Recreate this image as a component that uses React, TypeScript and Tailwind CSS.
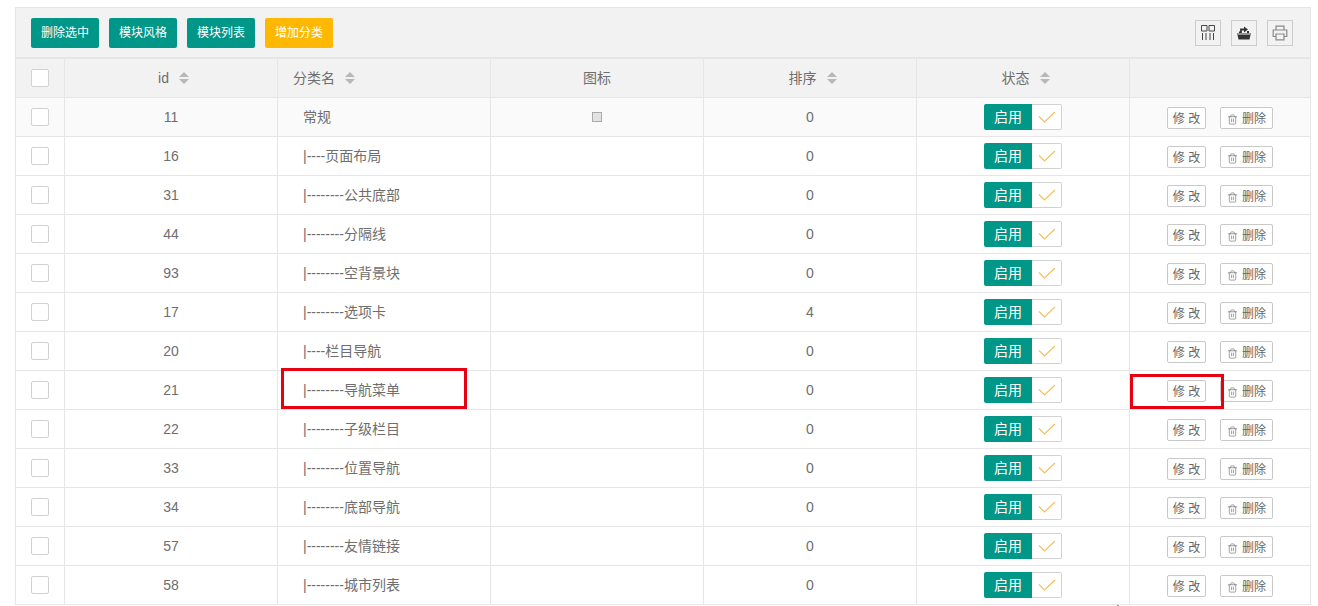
import { Trash2 } from "lucide-react";

const rows = [
  { id: 11, name: "常规", order: 0, icon: true },
  { id: 16, name: "|----页面布局", order: 0 },
  { id: 31, name: "|--------公共底部", order: 0 },
  { id: 44, name: "|--------分隔线", order: 0 },
  { id: 93, name: "|--------空背景块", order: 0 },
  { id: 17, name: "|--------选项卡", order: 4 },
  { id: 20, name: "|----栏目导航", order: 0 },
  { id: 21, name: "|--------导航菜单", order: 0 },
  { id: 22, name: "|--------子级栏目", order: 0 },
  { id: 33, name: "|--------位置导航", order: 0 },
  { id: 34, name: "|--------底部导航", order: 0 },
  { id: 57, name: "|--------友情链接", order: 0 },
  { id: 58, name: "|--------城市列表", order: 0 },
];

function SortIcon() {
  return (
    <svg width="10" height="12" viewBox="0 0 10 12" className="ml-[10px] shrink-0 fill-[#b8b8b8]">
      <path d="M5 0 10 5H0Z" />
      <path d="M5 12 0 7h10Z" />
    </svg>
  );
}

function Checkbox() {
  return <span className="block h-[18px] w-[18px] rounded-[2px] border border-[#d2d2d2] bg-white" />;
}

function ToolButton({ children }: { children: React.ReactNode }) {
  return <div className="flex h-[26px] w-[26px] items-center justify-center border border-[#ccc]">{children}</div>;
}

function Switch() {
  return (
    <div className="flex h-[26px] w-[78px]">
      <span className="flex w-[48px] items-center justify-center rounded-l-[2px] bg-[#009688] text-sm text-white">启用</span>
      <span className="flex w-[30px] items-center justify-center rounded-r-[2px] border border-l-0 border-[#d2d2d2] bg-white">
        <svg width="18" height="12" viewBox="0 0 18 12" fill="none" stroke="#f5c15c" strokeWidth="1.2">
          <path d="M1 5.500 6.500 11 17 1" />
        </svg>
      </span>
    </div>
  );
}

export default function App() {
  return (
    <div className="relative h-[606px] w-[1318px] overflow-hidden bg-white pl-[15px] pt-[7px] font-['Liberation_Sans','Noto_Sans_CJK_SC',sans-serif] text-sm text-[#6e6e6e]">
      <div className="flex h-[51px] w-[1296px] items-center justify-between border border-[#e6e6e6] bg-[#f2f2f2] pl-[15px] pr-[17px]">
        <div className="flex gap-[10px]">
          {["删除选中", "模块风格", "模块列表"].map((label) => (
            <button key={label} className="h-[30px] w-[68px] rounded-[2px] bg-[#009688] text-xs text-white">
              {label}
            </button>
          ))}
          <button className="h-[30px] w-[68px] rounded-[2px] bg-[#ffb800] text-xs text-white">增加分类</button>
        </div>
        <div className="flex gap-[10px]">
          <ToolButton>
            <svg width="14" height="15" viewBox="0 0 14 15" fill="none" stroke="#444" strokeWidth="1">
              <path d="M.5.500h5.500v5.500H.5zM8 .5h5.500v5.500H8zM1.500 8v7M5 8v7M9 8v7M12.500 8v7" />
            </svg>
          </ToolButton>
          <ToolButton>
            <svg width="16" height="14" viewBox="0 0 16 14">
              <path d="M1 7.500h14v1H1z" fill="#333" />
              <path d="M1.500 9h13l-1 4.500h-11Z" fill="#333" />
              <path d="M3 7V5.500h2V7zM11 7V5h2v2z" fill="#333" />
              <path d="M5 7V3.500h3.500" fill="none" stroke="#333" strokeWidth="1.800" />
              <path d="M8 .5 12 3.500 8 6.500Z" fill="#333" />
            </svg>
          </ToolButton>
          <ToolButton>
            <svg width="16" height="16" viewBox="0 0 16 16" fill="none" stroke="#888" strokeWidth="1.2">
              <path d="M4 5V1.200h8V5M4 11.500H1.200V5h13.600v6.500H12" />
              <path d="M4 9h8v5.800H4z" />
            </svg>
          </ToolButton>
        </div>
      </div>
      <table className="w-[1296px] table-fixed border-collapse">
        <colgroup>
          <col className="w-[49px]" />
          <col className="w-[213px]" />
          <col className="w-[213px]" />
          <col className="w-[213px]" />
          <col className="w-[213px]" />
          <col className="w-[213px]" />
          <col />
        </colgroup>
        <thead>
          <tr className="h-[39px] bg-[#f2f2f2] [&>th]:border [&>th]:border-[#e6e6e6] [&>th]:p-0 [&>th]:font-normal">
            <th>
              <div className="flex justify-center">
                <Checkbox />
              </div>
            </th>
            <th>
              <div className="flex items-center justify-center pl-[5px]">
                id
                <SortIcon />
              </div>
            </th>
            <th>
              <div className="flex items-center pl-[15px]">
                分类名
                <SortIcon />
              </div>
            </th>
            <th>图标</th>
            <th>
              <div className="flex items-center justify-center pl-[5px]">
                排序
                <SortIcon />
              </div>
            </th>
            <th>
              <div className="flex items-center justify-center pl-[5px]">
                状态
                <SortIcon />
              </div>
            </th>
            <th />
          </tr>
        </thead>
        <tbody>
          {rows.map((row) => (
            <tr
              key={row.id}
              className={`h-[39px] [&>td]:border [&>td]:border-[#e6e6e6] [&>td]:p-0 ${row.icon ? "bg-[#fafafa]" : "bg-white"}`}
            >
              <td>
                <div className="flex justify-center">
                  <Checkbox />
                </div>
              </td>
              <td className="text-center">{row.id}</td>
              <td className="pl-[25px]!">{row.name}</td>
              <td>
                {row.icon && (
                  <div className="flex justify-center">
                    <span className="block h-[10px] w-[10px] border border-[#aaa] bg-[#e2e2e2]" />
                  </div>
                )}
              </td>
              <td className="text-center">{row.order}</td>
              <td>
                <div className="flex justify-center">
                  <Switch />
                </div>
              </td>
              <td>
                <div className="flex translate-y-[1px] justify-center gap-[14px]">
                  <button className="h-[22px] w-[39px] rounded-[2px] border border-[#c9c9c9] bg-white pt-[2px] text-xs text-[#666]">修 改</button>
                  <button className="flex h-[22px] w-[53px] items-center justify-center gap-[4px] rounded-[2px] border border-[#c9c9c9] bg-white pt-[2px] text-xs text-[#666]">
                    <Trash2 size={11} strokeWidth={1.5} className="text-[#777]" />
                    删除
                  </button>
                </div>
              </td>
            </tr>
          ))}
        </tbody>
      </table>
      <div className="absolute left-[281px] top-[368px] h-[41px] w-[186px] border-[3px] border-[#e60012]" />
      <div className="absolute left-[1130px] top-[374px] h-[35px] w-[94px] border-[3px] border-[#e60012]" />
      <div className="absolute left-[1117px] top-[605px] h-px w-[2px] bg-[#999]" />
    </div>
  );
}
